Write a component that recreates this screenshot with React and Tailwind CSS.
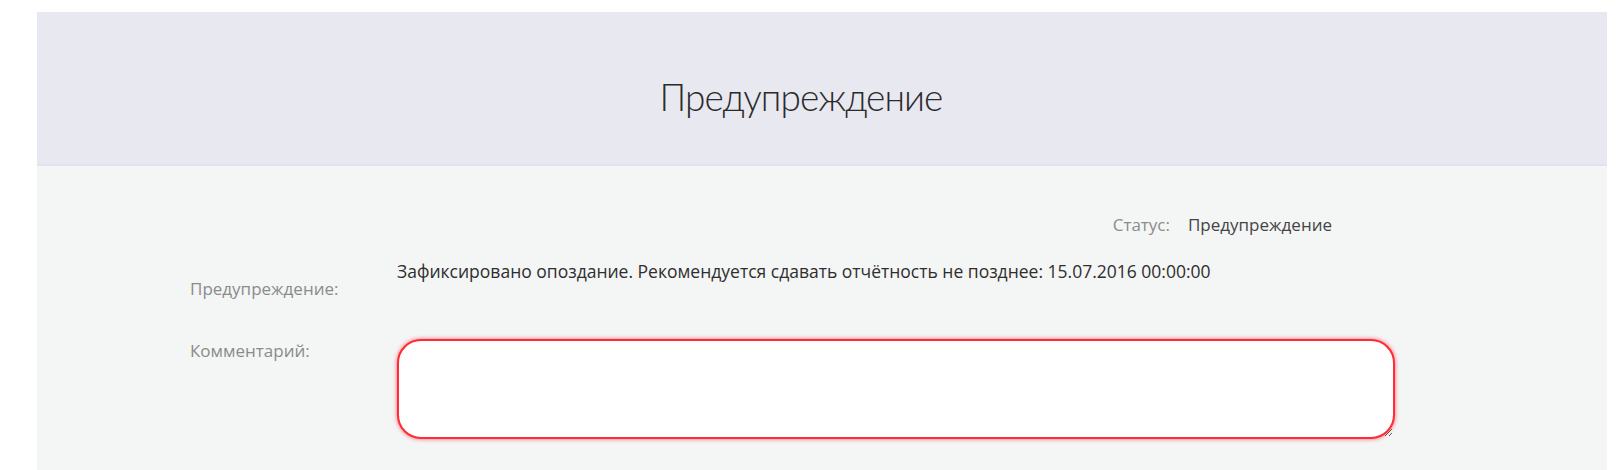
import React from 'react';

export default function App() {
    return (
        <div className="w-[1624px] h-[470px] bg-white pt-[12px] pl-[37px] pr-[17px] flex flex-col overflow-hidden" style={{ fontFamily: '"Open Sans", "Noto Sans", sans-serif' }}>
            <header className="h-[154px] shrink-0 bg-[#e8e8f1] border-b-2 border-[#dfe3ec] flex items-center justify-center pr-[42px] pt-[18px]">
                <h1 className="text-[37px] font-light text-[#2b2b2b] tracking-tight" style={{ fontFamily: 'Lato, "Open Sans", sans-serif' }}>
                    Предупреждение
                </h1>
            </header>

            <main className="flex-1 bg-[#f4f5f5] flex flex-col pt-[47px]">
                <div className="flex justify-end pr-[275px] text-[17px] leading-6 gap-[18px]">
                    <span className="text-[#8b8b8b]">Статус:</span>
                    <span className="text-[#444]">Предупреждение</span>
                </div>

                <div className="flex mt-[22px] pl-[153px]">
                    <label className="w-[207px] shrink-0 mt-[18px] text-[17px] leading-6 text-[#8b8b8b]">Предупреждение:</label>
                    <p className="text-[17.5px] leading-6 text-[#2e2e2e]">
                        Зафиксировано опоздание. Рекомендуется сдавать отчётность не позднее: 15.07.2016 00:00:00
                    </p>
                </div>

                <div className="flex mt-[38px] pl-[153px]">
                    <label className="w-[207px] shrink-0 text-[17px] leading-6 text-[#8b8b8b]">Комментарий:</label>
                    <textarea className="w-[998px] h-[100px] rounded-[24px] bg-white border-2 border-[#ff2b36] shadow-[0_0_4px_rgba(255,0,20,0.6)] outline-none px-4 py-2 text-[16px]" />
                </div>
            </main>
        </div>
    );
}
